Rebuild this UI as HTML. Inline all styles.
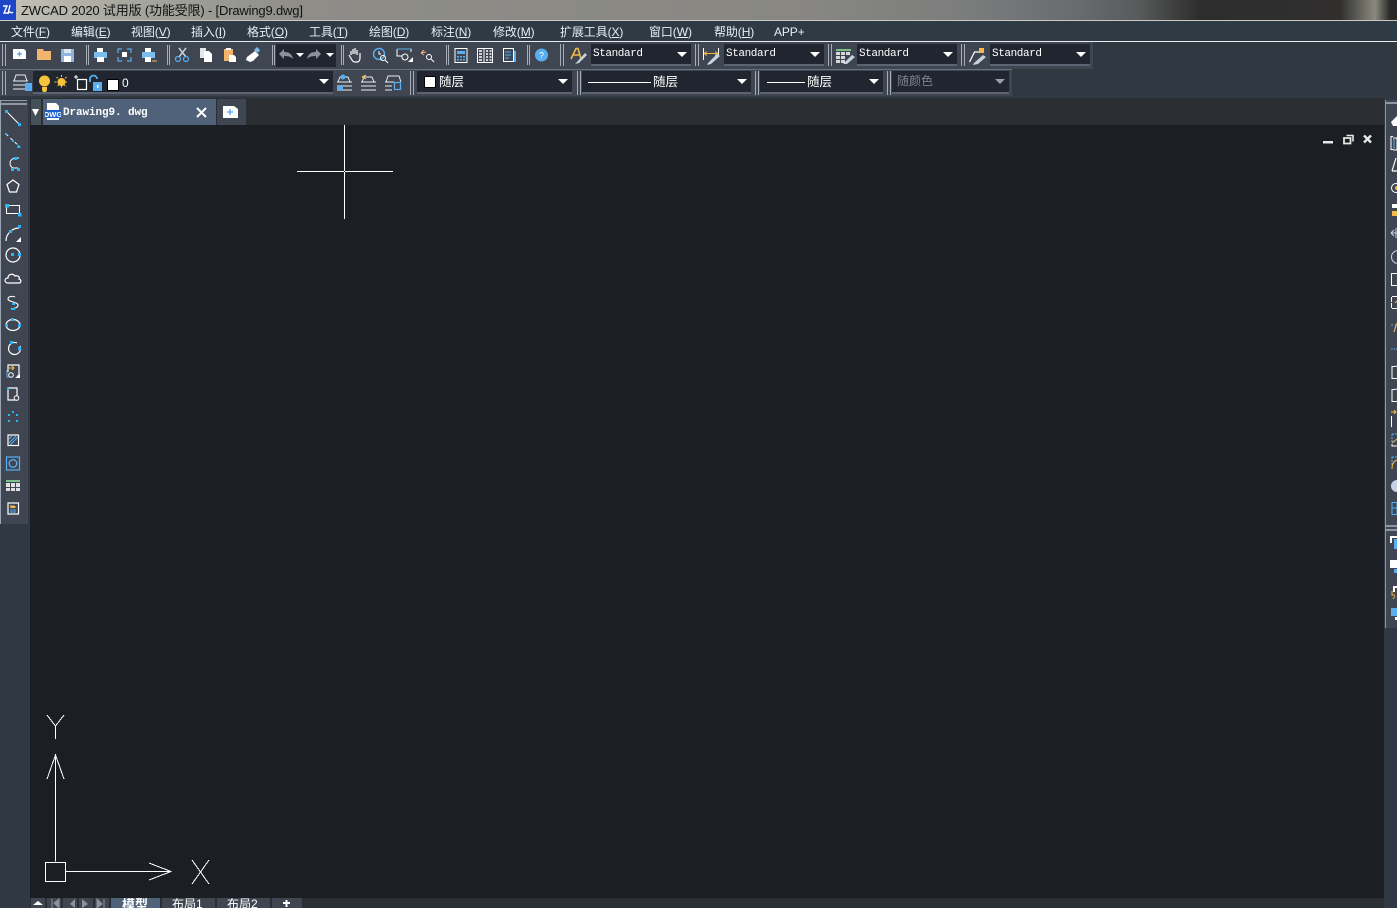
<!DOCTYPE html>
<html><head><meta charset="utf-8">
<style>
html,body{margin:0;padding:0;background:#1b1e23}
#r{position:relative;width:1397px;height:908px;overflow:hidden;background:#1b1e23;font-family:"Liberation Sans","Noto Sans CJK SC",sans-serif;color:#fff}
.a{position:absolute}
.t{position:absolute;white-space:nowrap;line-height:1}
.m{font-size:12px;top:25px;color:#e8eef2;line-height:14px;letter-spacing:-.1px}
.cb{position:absolute;background:#20252f;border-bottom:2px solid #5b6472;box-sizing:border-box}
.g{position:absolute;width:1px;background:#a5adb8}
.arr{position:absolute;width:0;height:0;border-left:5px solid transparent;border-right:5px solid transparent;border-top:5px solid #fff}
.std{position:absolute;font-family:"Liberation Mono",monospace;font-size:11px;letter-spacing:-.4px;line-height:12px;color:#fff;white-space:nowrap}
.l{font-size:12.5px;top:75px;line-height:14px}
</style></head><body><div id="r">
<!-- title bar -->
<div class="a" style="left:0;top:0;width:1397px;height:20px;background:linear-gradient(90deg,#c4c4b8 0,#a8a8a0 120px,#8e8d88 300px,#888782 800px,#7c7d7d 960px,#686b6e 1080px,#57595a 1140px,#2e2d2d 1200px,#302f2e 1340px,#8a8a80 1375px,#2a2927 1390px)"></div>
<div class="a" style="left:0;top:20px;width:1397px;height:1px;background:#c9c9c5"></div>
<div class="a" style="left:0;top:0;width:16px;height:20px;background:#1d46c8"></div>
<svg class="a" style="left:0;top:0" width="16" height="20"><path d="M3 6h4l-3 7h4M10 5l-2 9M9 12c2 0 2 2 4 0" stroke="#fff" stroke-width="1.400" fill="none"/></svg>
<div class="t" style="left:21px;top:4px;font-size:13px;line-height:14px;color:#111;letter-spacing:-.17px">ZWCAD 2020 试用版 (功能受限) - [Drawing9.dwg]</div>
<!-- menu -->
<div class="a" style="left:0;top:21px;width:1397px;height:20px;background:#2e3a44"></div>
<div class="a" style="left:0;top:41px;width:1397px;height:1px;background:#e8ecef"></div>
<div class="t m" style="left:11px">文件(<u>F</u>)</div>
<div class="t m" style="left:71px">编辑(<u>E</u>)</div>
<div class="t m" style="left:131px">视图(<u>V</u>)</div>
<div class="t m" style="left:191px">插入(<u>I</u>)</div>
<div class="t m" style="left:247px">格式(<u>O</u>)</div>
<div class="t m" style="left:309px">工具(<u>T</u>)</div>
<div class="t m" style="left:369px">绘图(<u>D</u>)</div>
<div class="t m" style="left:431px">标注(<u>N</u>)</div>
<div class="t m" style="left:493px">修改(<u>M</u>)</div>
<div class="t m" style="left:560px">扩展工具(<u>X</u>)</div>
<div class="t m" style="left:649px">窗口(<u>W</u>)</div>
<div class="t m" style="left:714px">帮助(<u>H</u>)</div>
<div class="t m" style="left:774px">APP+</div>
<!-- toolbar background -->
<div class="a" style="left:0;top:42px;width:1397px;height:56px;background:#303842"></div>
<div class="a" style="left:0;top:42px;width:1093px;height:27px;background:#3f4652"></div>
<div class="a" style="left:0;top:69px;width:1012px;height:27px;background:#3f4652;border-top:1px solid #69727f;box-sizing:border-box"></div>
<!-- grips -->
<div class="g" style="left:2px;top:44px;height:22px"></div><div class="g" style="left:5px;top:44px;height:22px"></div>
<div class="g" style="left:2px;top:71px;height:24px"></div><div class="g" style="left:5px;top:71px;height:24px"></div>
<div class="g" style="left:86px;top:45px;height:20px"></div><div class="g" style="left:88px;top:45px;height:20px"></div>
<div class="g" style="left:167px;top:45px;height:20px"></div><div class="g" style="left:169px;top:45px;height:20px"></div>
<div class="g" style="left:272px;top:45px;height:20px"></div><div class="g" style="left:274px;top:45px;height:20px"></div>
<div class="g" style="left:341px;top:45px;height:20px"></div><div class="g" style="left:343px;top:45px;height:20px"></div>
<div class="g" style="left:446px;top:45px;height:20px"></div><div class="g" style="left:448px;top:45px;height:20px"></div>
<div class="g" style="left:527px;top:45px;height:20px"></div><div class="g" style="left:529px;top:45px;height:20px"></div>
<div class="g" style="left:560px;top:44px;height:22px"></div><div class="g" style="left:563px;top:44px;height:22px"></div>
<div class="g" style="left:695px;top:44px;height:22px"></div><div class="g" style="left:698px;top:44px;height:22px"></div>
<div class="g" style="left:828px;top:44px;height:22px"></div><div class="g" style="left:831px;top:44px;height:22px"></div>
<div class="g" style="left:961px;top:44px;height:22px"></div><div class="g" style="left:964px;top:44px;height:22px"></div>
<div class="g" style="left:410px;top:71px;height:24px"></div><div class="g" style="left:413px;top:71px;height:24px"></div>
<div class="g" style="left:577px;top:71px;height:24px"></div><div class="g" style="left:580px;top:71px;height:24px"></div>
<div class="g" style="left:755px;top:71px;height:24px"></div><div class="g" style="left:758px;top:71px;height:24px"></div>
<div class="g" style="left:887px;top:71px;height:24px"></div><div class="g" style="left:890px;top:71px;height:24px"></div>
<!-- toolbar 1 icons -->
<svg class="a" style="left:0;top:42px" width="560" height="27" fill="none">
<path d="M13 7h11l2 2v8H13z" fill="#fff"/><path d="M17 12h5M19.500 9.500v5" stroke="#4aa8f0" stroke-width="1.300"/>
<path d="M37 7h6l1 2h7v9H37z" fill="#f3b56d"/>
<path d="M61 7h13v13H61z" fill="#8fb5dc"/><path d="M64 7h7v4h-7z" fill="#dbe6f1"/><path d="M64 14h7v6h-7z" fill="#fff"/>
<path d="M97 6h6v4h-6z" fill="#fff"/><path d="M94 10h13v6H94z" fill="#7cbdf0"/><path d="M97 15h7v5h-7z" fill="#fff"/>
<path d="M118 11V7h4M127 7h4v4M131 15v4h-4M122 19h-4v-4" stroke="#58aef0" stroke-width="1.200"/><path d="M122 10h5v5h-5z" fill="#fff"/>
<path d="M145 6h6v4h-6z" fill="#fff"/><path d="M142 10h13v6h-13z" fill="#7cbdf0"/><path d="M145 15h6v5h-6z" fill="#fff"/><path d="M152 19h5" stroke="#f3b56d"/>
<path d="M179 6l7 9M186 6l-7 9" stroke="#c7d2de" stroke-width="1.500"/><circle cx="178" cy="17" r="2.500" stroke="#58aef0" stroke-width="1.200"/><circle cx="186" cy="17" r="2.500" stroke="#58aef0" stroke-width="1.200"/>
<path d="M200 6h6v10h-6z" fill="#dfe6ee"/><path d="M204 9h5l3 3v8h-8z" fill="#fff"/>
<path d="M224 7h9v12h-9z" fill="#f3b56d"/><path d="M226 6h5v2h-5z" fill="#fff"/><path d="M229 13h5l2 2v5h-7z" fill="#fff"/>
<path d="M247 15l8-6 4 4-6 6-3 1-4-2z" fill="#fff"/><path d="M254 8l3-3 3 3-2 3z" fill="#7cbdf0"/>
<rect x="276" y="2" width="60" height="23" fill="#20252f"/>
<path d="M279 12l5-5v3c5 0 8 2 9 7-2-2-4-3-9-3v3z" fill="#8c929c"/>
<path d="M321 12l-5-5v3c-5 0-8 2-9 7 2-2 4-3 9-3v3z" fill="#8c929c"/>
<path d="M296 11h8l-4 4zM326 11h8l-4 4z" fill="#fff"/>
<path d="M351 13v-4m2 3V7m2 5V6m2 7V8m-8 5l3 5c1 2 2 2 4 2h1c2 0 3-2 3-4v-5" stroke="#fff" stroke-width="1.200"/>
<circle cx="379" cy="12" r="5.500" stroke="#58aef0" stroke-width="1.500"/><circle cx="383" cy="16" r="2.500" stroke="#fff"/><path d="M385 18l3 3M379 9v3h2" stroke="#fff"/>
<path d="M397 7h14v3M397 7v7h5" stroke="#fff"/><path d="M397 7h14" stroke="#58aef0"/><circle cx="405" cy="15" r="3" stroke="#fff"/><path d="M408 20l5-5v5z" fill="#fff"/>
<path d="M421 11l5-1M421 11l3-3M421 11l3 2" stroke="#f3b56d"/><circle cx="429" cy="15" r="2.500" stroke="#fff"/><path d="M431 17l3 3" stroke="#fff"/>
<path d="M455 6.500h12v14h-12z" stroke="#fff"/><path d="M457 9h8v3h-8z" fill="#58aef0"/><path d="M457 14h2v1.500h-2zM460 14h2v1.500h-2zM463 14h2v1.500h-2zM457 17h2v1.500h-2zM460 17h2v1.500h-2zM463 17h2v1.500h-2z" fill="#58aef0"/>
<path d="M477.500 6.500h15v14h-15z" stroke="#fff"/><path d="M484 6v15" stroke="#fff"/><path d="M479 9h3M479 12h3M479 15h3M479 18h3M486 9h2M489.500 9h2M486 12h2M489.500 12h2M486 15h2M489.500 15h2M486 18h2M489.500 18h2" stroke="#fff" stroke-width="1.500"/>
<path d="M503.500 6.500h10v13h-10z" stroke="#fff"/><path d="M505 10h6M505 13h6M505 16h4" stroke="#58aef0"/><path d="M514 9h2v11h-2z" fill="#58aef0"/>
<circle cx="541.500" cy="13" r="6.500" fill="#58aef0"/>
<text x="541.500" y="16.500" text-anchor="middle" font-size="9" font-family="Liberation Sans" fill="#fff">?</text>
</svg>
<!-- standard combos -->
<svg class="a" style="left:566px;top:42px" width="24" height="27" fill="none"><path d="M5 17L10 6.500h2l3 10.500M7 13h7" stroke="#f3b94a" stroke-width="1.600"/><path d="M10 21l9-10 2 2-8 8-4 1z" fill="#c7d2de"/></svg>
<div class="cb" style="left:591px;top:44px;width:100px;height:22px"></div>
<div class="std" style="left:593px;top:48px">Standard</div><div class="arr" style="left:677px;top:52px"></div>
<svg class="a" style="left:700px;top:42px" width="24" height="27" fill="none"><path d="M3.500 6v12M18.500 6v7" stroke="#fff"/><path d="M4 11.500h14M4 11.500l3-2M4 11.500l3 2M18 11.500l-3-2M18 11.500l-3 2" stroke="#f3b94a"/><path d="M8 21l9-9 3 2-9 8-4 1z" fill="#c7d2de"/></svg>
<div class="cb" style="left:724px;top:44px;width:100px;height:22px"></div>
<div class="std" style="left:726px;top:48px">Standard</div><div class="arr" style="left:810px;top:52px"></div>
<svg class="a" style="left:834px;top:42px" width="24" height="27"><path d="M2 7h15v2H2z" fill="#7cc08a"/><path d="M2 10h4v3H2zM7 10h4v3H7zM12 10h4v3h-4zM2 14h4v3H2zM7 14h4v3H7zM2 18h4v3H2zM7 18h4v3H7z" fill="#d8d8d8"/><path d="M10 21l8-8 3 2-8 7-4 0z" fill="#c7d2de"/></svg>
<div class="cb" style="left:857px;top:44px;width:100px;height:22px"></div>
<div class="std" style="left:859px;top:48px">Standard</div><div class="arr" style="left:943px;top:52px"></div>
<svg class="a" style="left:967px;top:42px" width="24" height="27" fill="none"><path d="M2.500 20l5-10h6" stroke="#fff" stroke-width="1.200"/><path d="M12 6h5v5h-5z" fill="#f3b94a"/><path d="M7 21l9-8 3 2-8 7-5 1z" fill="#c7d2de"/></svg>
<div class="cb" style="left:990px;top:44px;width:100px;height:22px"></div>
<div class="std" style="left:992px;top:48px">Standard</div><div class="arr" style="left:1076px;top:52px"></div>
<!-- layer row -->
<svg class="a" style="left:8px;top:72px" width="24" height="22" fill="none"><path d="M6 9l2-6h9l2 6M5 9h15M5 13h12M5 17h12" stroke="#e8edf2"/><rect x="17" y="11" width="7" height="8" fill="#58aef0"/></svg>
<div class="cb" style="left:33px;top:71px;width:300px;height:23px"></div>
<svg class="a" style="left:34px;top:72px" width="100" height="22" fill="none">
<circle cx="10.500" cy="9" r="5.500" fill="#f8c33a"/><path d="M8 15h5v3l-1 2h-3l-1-2z" fill="#f8c33a"/>
<circle cx="27.500" cy="10" r="4" fill="#f8c33a"/><path d="M27.500 3v14M20.500 10h14M22.500 5l10 10M32.500 5l-10 10" stroke="#f8c33a" stroke-dasharray="2 1.500"/>
<path d="M43.500 7.500h9v10h-9z" stroke="#fff" stroke-width="1.200"/><path d="M40 5l4 0M42 3v4" stroke="#fff"/>
<path d="M56 10V7a3.500 3.500 0 0 1 7 0" stroke="#58aef0" stroke-width="1.800"/><rect x="59" y="10" width="9" height="9" fill="#58aef0"/><rect x="63" y="13" width="1.500" height="3" fill="#fff"/>
<rect x="73.500" y="7.500" width="11" height="11" fill="#fff" stroke="#000"/>
</svg>
<div class="t" style="left:122px;top:77px;font-size:12px;line-height:13px;color:#fff">0</div>
<div class="arr" style="left:319px;top:79px"></div>
<svg class="a" style="left:334px;top:72px" width="72" height="22" fill="none">
<path d="M4 10l2-5h8l2 5M3 10h15M3 14h15M3 18h15" stroke="#e8edf2"/><circle cx="9" cy="5" r="2.500" fill="#58aef0"/><path d="M3 14h6v4H3z" fill="#58aef0"/>
<path d="M28 10l2-5h8l2 5M27 10h15M27 14h15M27 18h15" stroke="#e8edf2"/><path d="M28 5l4-2M28 5l4 2" stroke="#f3b94a"/>
<path d="M52 10l2-6h11l2 6M51 10h9M51 14h7M51 18h7" stroke="#e8edf2"/><rect x="60.500" y="10.500" width="6" height="7" stroke="#58aef0" stroke-width="1.200"/>
</svg>
<div class="cb" style="left:417px;top:71px;width:155px;height:23px"></div>
<div class="a" style="left:424px;top:76px;width:12px;height:12px;background:#fff;border:1px solid #000;box-sizing:border-box"></div>
<div class="t l" style="left:439px">随层</div>
<div class="arr" style="left:558px;top:79px"></div>
<div class="cb" style="left:582px;top:71px;width:169px;height:23px"></div>
<div class="a" style="left:588px;top:82px;width:63px;height:1px;background:#fff"></div>
<div class="t l" style="left:653px">随层</div>
<div class="arr" style="left:737px;top:79px"></div>
<div class="cb" style="left:760px;top:71px;width:123px;height:23px"></div>
<div class="a" style="left:767px;top:82px;width:38px;height:1px;background:#fff"></div>
<div class="t l" style="left:807px">随层</div>
<div class="arr" style="left:869px;top:79px"></div>
<div class="cb" style="left:892px;top:71px;width:117px;height:23px"></div>
<div class="t" style="left:897px;top:74px;font-size:12px;line-height:14px;color:#7c828b">随颜色</div>
<div class="arr" style="left:995px;top:79px;border-top-color:#9aa0a8"></div>
<!-- tab row -->
<div class="a" style="left:30px;top:98px;width:1354px;height:27px;background:#2b2e33"></div>
<div class="a" style="left:31px;top:99px;width:10px;height:26px;background:#465059"></div>
<svg class="a" style="left:31px;top:107px" width="10" height="10"><path d="M1 2h7L4.500 9z" fill="#fff"/></svg>
<div class="a" style="left:43px;top:99px;width:173px;height:26px;background:#50627a"></div>
<svg class="a" style="left:45px;top:103px" width="16" height="20"><path d="M2 0h9l3 3v14H2z" fill="#fff"/><rect x="0" y="7" width="16" height="8" fill="#1a5fd0"/><text x="8" y="14" text-anchor="middle" font-size="7.500" font-family="Liberation Sans" font-weight="bold" fill="#fff">DWG</text></svg>
<div class="t" style="left:63px;top:107px;font-family:'Liberation Mono',monospace;font-size:11px;font-weight:bold;line-height:13px;letter-spacing:-.1px">Drawing9. dwg</div>
<svg class="a" style="left:196px;top:107px" width="11" height="11"><path d="M1 1l9 9M10 1l-9 9" stroke="#fff" stroke-width="2"/></svg>
<div class="a" style="left:217px;top:99px;width:29px;height:26px;background:#3f4652"></div>
<svg class="a" style="left:223px;top:106px" width="16" height="12"><path d="M0 0h11l4 3v9H0z" fill="#fff"/><path d="M4 6h6M7 3v6" stroke="#4aa8f0" stroke-width="1.300"/></svg>
<!-- left toolbar -->
<div class="a" style="left:0;top:98px;width:30px;height:810px;background:#2f3843"></div>
<div class="a" style="left:0;top:100px;width:28px;height:424px;background:#3f4652;border-left:1px solid #9aa5b4;box-sizing:border-box"></div>
<div class="a" style="left:1px;top:100px;width:26px;height:1px;background:#8e97a3"></div>
<div class="a" style="left:1px;top:103px;width:26px;height:2px;background:#8e97a3"></div>
<svg class="a" style="left:0;top:100px" width="30" height="424" fill="none">
<path d="M7 12l12 12" stroke="#fff"/><path d="M5 10h3v3H5zM18 23h3v3h-3z" fill="#2db4f5"/>
<path d="M6 34l14 13" stroke="#fff" stroke-dasharray="3 3"/><path d="M5 33h2v2H5zM12 40h2v2h-2zM18 44l3 4h-4z" fill="#2db4f5"/>
<path d="M19 58h-3c-4 0-6 3-6 5s1 4 3 5h5" stroke="#fff"/><path d="M14 57h3v3h-3zM11 68h3v3h-3zM17 68h3v3h-3z" fill="#2db4f5"/>
<path d="M13 80l6 4.500-2.500 7.500h-7l-2.500-7.500z" stroke="#fff" stroke-width="1.200"/>
<path d="M6.500 105.500h13v8h-13z" stroke="#fff"/><path d="M5 104h4v3.500H5zM18 113h3.500v3.500H18z" fill="#2db4f5"/>
<path d="M6 141c0-7 6-13 13-13" stroke="#fff" stroke-width="1.200"/><path d="M9 130h3v3H9zM18 125h3v3h-3z" fill="#2db4f5"/><path d="M16 142l5-5v5z" fill="#fff"/>
<circle cx="13" cy="155" r="7" stroke="#fff" stroke-width="1.200"/><path d="M11 153h3v3h-3zM18 153h3v3h-3z" fill="#2db4f5"/>
<path d="M8 183c-4 0-4-5 0-5 0-4 5-5 7-2 3-1 5 1 4 3 3 1 2 4 0 4z" stroke="#fff" stroke-width="1.200"/>
<path d="M15 197c-2-1-7-1-7 2s10 3 10 6-3 3-7 4" stroke="#fff" stroke-width="1.100"/><path d="M12 203h3v2h-3zM12 208h3v2h-3z" fill="#2db4f5"/>
<ellipse cx="13" cy="225" rx="7" ry="5.500" stroke="#fff" stroke-width="1.200"/><path d="M11 218h3v3h-3zM5 224h3v3H5zM18 224h3v3h-3z" fill="#2db4f5"/>
<path d="M17 243a6 6 0 1 0 3 3" stroke="#fff" stroke-width="1.200"/><path d="M10 241h3v3h-3zM18 247h3v3h-3z" fill="#2db4f5"/>
<path d="M8 272v-7h11v11h-2" stroke="#fff" stroke-width="1.200"/><path d="M7 270v7h3" stroke="#58aef0"/><circle cx="11" cy="275" r="2.300" stroke="#fff"/><path d="M15 278l5-4v4z" fill="#fff"/><path d="M9 268h5M12 266l2 2-2 2" stroke="#f3b94a"/>
<path d="M8 288h9v12h-9z" stroke="#fff" stroke-width="1.200"/><circle cx="16.500" cy="298" r="2.300" fill="#3f4652" stroke="#fff"/><path d="M7 288h2v2H7z" fill="#2db4f5"/>
<path d="M12 311h2v2h-2zM8 314h2v2H8zM16 314h2v2h-2zM8 320h2v2H8zM16 320h2v2h-2z" fill="#2db4f5"/>
<rect x="8" y="335" width="10.500" height="10.500" stroke="#fff" stroke-width="1.200"/><path d="M9 343l7-7M10 345l8-8M9 339l3-3" stroke="#58aef0"/>
<rect x="6.500" y="357" width="13" height="13" stroke="#58aef0" stroke-width="1.200"/><circle cx="13" cy="363.500" r="3.800" stroke="#58aef0" stroke-width="1.400"/>
<path d="M6 380h14v2H6z" fill="#7cc08a"/><path d="M6 383h4v4H6zM11 383h4v4h-4zM16 383h4v4h-4zM6 388h4v3H6zM11 388h4v3h-4zM16 388h4v3h-4z" fill="#e0e0e0"/>
<rect x="8" y="403" width="10.500" height="11" stroke="#fff" stroke-width="1.200"/><path d="M10 406l1-1 1.500 1 1-1 1 1 1 0v2h-5z" fill="#f3b94a"/><path d="M10 410h6M10 412h6" stroke="#58aef0"/>
</svg>
<!-- right toolbar -->
<div class="a" style="left:1384px;top:98px;width:13px;height:810px;background:#2f3843"></div>
<div class="a" style="left:1385px;top:100px;width:12px;height:528px;background:#3f4652;border-left:1px solid #8e97a3;box-sizing:border-box"></div>
<div class="a" style="left:1386px;top:102px;width:11px;height:2px;background:#8e97a3"></div>
<div class="a" style="left:1386px;top:525px;width:11px;height:2px;background:#8e97a3"></div>
<div class="a" style="left:1386px;top:529px;width:11px;height:2px;background:#8e97a3"></div>
<svg class="a" style="left:1385px;top:100px" width="12" height="528" fill="none">
<path d="M6 22l6-6v10H8z" fill="#fff"/>
<path d="M8 36.500H6v13h2M8 38h4v12H8" stroke="#fff"/><path d="M9 38v11" stroke="#58aef0"/>
<path d="M7 71l4-13M7 71h5" stroke="#fff" stroke-width="1.200"/>
<circle cx="11" cy="88" r="4.500" stroke="#fff"/><circle cx="12" cy="88" r="2" fill="#f3b94a"/>
<path d="M7 104h5v4H7z" fill="#fff"/><path d="M7 111h5v5H7z" fill="#f3b94a"/>
<path d="M6 133l3-3M6 133l3 3M6 133h6M11 128v10" stroke="#c7d8ee"/>
<circle cx="13" cy="157" r="6.500" stroke="#c7d8ee"/>
<path d="M12 173.500H6.500v12H12" stroke="#fff"/>
<path d="M12 196.500H6.500v12H12" stroke="#fff" stroke-dasharray="5 1"/><path d="M10 203l2-2" stroke="#f3b94a"/>
<path d="M6 225h2M9 232l2-8" stroke="#58aef0"/><path d="M9 232l3-9" stroke="#f3b94a"/>
<path d="M6 249h6" stroke="#58aef0" stroke-dasharray="1.500 1"/>
<path d="M12 266.500H7v12H12" stroke="#fff"/><path d="M10 266h2" stroke="#58aef0"/>
<path d="M12 289.500H7v12H12" stroke="#fff"/><path d="M10 289h2" stroke="#58aef0"/>
<path d="M6.500 316v11" stroke="#fff"/><path d="M6 312h5M9 310l2 2-2 2" stroke="#f3b94a"/>
<path d="M7 334h5M7 334v9" stroke="#58aef0" stroke-dasharray="2 1"/><path d="M7 344v2h5" stroke="#fff"/><path d="M7 343l5-4" stroke="#f3b94a"/>
<path d="M7 357h5M7 357v9" stroke="#58aef0" stroke-dasharray="2 1"/><path d="M7 369c0-5 2-8 5-9" stroke="#f3b94a"/>
<circle cx="12" cy="386" r="6" fill="#c7d2e6"/>
<path d="M7 402.500h5v12H7zM7 408h5" stroke="#58aef0"/>
<path d="M6 443v-6h6" stroke="#fff" stroke-width="2"/><rect x="9" y="439" width="3" height="10" fill="#58aef0"/>
<rect x="5" y="460" width="7" height="8" fill="#fff"/><rect x="9" y="469" width="3" height="4" fill="#58aef0"/>
<path d="M9 492v-5h3" stroke="#fff" stroke-width="2"/><path d="M7 491v4h3M8 499l2-3" stroke="#f3b94a"/>
<rect x="6" y="508" width="6" height="8" fill="#58aef0"/><rect x="10" y="517" width="2" height="3" fill="#fff"/>
</svg>
<!-- bottom -->
<div class="a" style="left:30px;top:898px;width:1354px;height:10px;background:#2b2e33"></div>
<div class="a" style="left:31px;top:898px;width:14px;height:10px;background:#3f4652"></div>
<div class="a" style="left:47px;top:898px;width:14px;height:10px;background:#3f4652"></div>
<div class="a" style="left:63px;top:898px;width:14px;height:10px;background:#3f4652"></div>
<div class="a" style="left:79px;top:898px;width:14px;height:10px;background:#3f4652"></div>
<div class="a" style="left:95px;top:898px;width:14px;height:10px;background:#3f4652"></div>
<div class="a" style="left:111px;top:898px;width:49px;height:10px;background:#50627a;overflow:hidden"><div class="t" style="left:11px;top:0;font-size:13px;font-weight:bold;line-height:13px">模型</div></div>
<div class="a" style="left:162px;top:898px;width:53px;height:10px;background:#3f4652;overflow:hidden"><div class="t" style="left:10px;top:0;font-size:12px;line-height:13px">布局1</div></div>
<div class="a" style="left:217px;top:898px;width:53px;height:10px;background:#3f4652;overflow:hidden"><div class="t" style="left:10px;top:0;font-size:12px;line-height:13px">布局2</div></div>
<div class="a" style="left:272px;top:898px;width:30px;height:10px;background:#3f4652"></div>
<svg class="a" style="left:30px;top:898px" width="272" height="10" fill="none">
<path d="M3 7l5-4 5 4z" fill="#fff"/>
<path d="M22 1v9M29 1l-5 4 5 5z" fill="#8c929c" stroke="#8c929c"/>
<path d="M45 1l-5 5 5 4z" fill="#8c929c"/>
<path d="M52 1l6 5-6 4z" fill="#8c929c"/>
<path d="M67 1l5 5-5 4zM74 1v9" fill="#8c929c" stroke="#8c929c"/>
<path d="M253 5h7M256.500 2v7" stroke="#fff" stroke-width="2"/>
</svg>
<!-- canvas window buttons -->
<svg class="a" style="left:1320px;top:132px" width="56" height="14" fill="none">
<path d="M3 9h10v2.500H3z" fill="#e8e8e8"/>
<path d="M24 6h6.500v5.500H24z" stroke="#e8e8e8" stroke-width="1.800"/><path d="M26.500 3.500h6.500v6" stroke="#e8e8e8" stroke-width="1.600"/>
<path d="M44 3.500l7 7M51 3.500l-7 7" stroke="#e8e8e8" stroke-width="2.400"/>
</svg>
<!-- crosshair -->
<div class="a" style="left:297px;top:171px;width:96px;height:1px;background:#fff"></div>
<div class="a" style="left:344px;top:125px;width:1px;height:94px;background:#fff"></div>
<div class="a" style="left:344px;top:171px;width:1px;height:1px;background:#1b1e23"></div>
<!-- UCS -->
<svg class="a" style="left:30px;top:700px" width="190" height="198" fill="none" stroke="#fff" shape-rendering="crispEdges">
<path d="M17 15l8.500 11L34 15M25.500 26v13"/>
<path d="M25.500 55v106.500"/>
<path d="M17 79L25.500 55 34 79"/>
<rect x="15.500" y="162.500" width="20" height="19"/>
<path d="M36 171.500h105"/>
<path d="M119 163l22 8.500-22 8.500"/>
<path d="M162 160l17 24M179 160l-17 24"/>
</svg>
</div></body></html>
